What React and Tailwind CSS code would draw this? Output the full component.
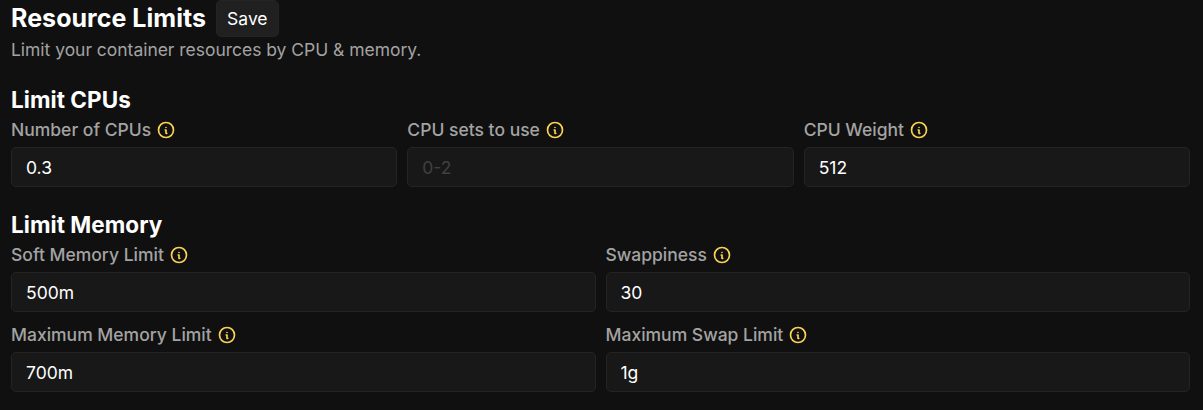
const InfoIcon = () => (
  <svg className="h-5 w-5 shrink-0 text-[#fcd452]" viewBox="0 0 24 24" fill="none" stroke="currentColor" strokeWidth="2" strokeLinecap="round" strokeLinejoin="round">
    <path d="M3 12a9 9 0 1 0 18 0a9 9 0 0 0-18 0m9-3h.01" />
    <path d="M11 12h1v4h1" />
  </svg>
);

const Field = ({ label, value, placeholder }) => (
  <div className="min-w-0 flex-1">
    <label className="mb-[5px] flex h-[25px] items-center gap-[5px] text-[17.5px] font-medium text-[#a3a3a3]">
      <span className="leading-[26px]">{label}</span>
      <InfoIcon />
    </label>
    <input
      className="block h-10 w-full rounded-[5px] border border-[#242424] bg-[#181818] px-3.5 text-[17.5px] text-white outline-none placeholder:text-[#404040]"
      defaultValue={value}
      placeholder={placeholder}
    />
  </div>
);

const SectionTitle = ({ children }) => (
  <h3 className="mt-5 h-[35px] text-[22.5px] leading-[35px] font-bold tracking-[0.05px] text-white">{children}</h3>
);

export default function App() {
  return (
    <div className="h-[410px] overflow-hidden bg-[#101010] pr-[13px] pl-[11px] font-['Inter',sans-serif]">
      <div className="flex h-[37px] items-center gap-2.5">
        <h2 className="text-[25px] leading-[35px] font-bold tracking-[0.04px] text-white">Resource Limits</h2>
        <button className="h-[37px] rounded-[5px] border border-[#242424] bg-[#202020] px-2.5 pt-0.5 text-[17.5px] text-white">Save</button>
      </div>
      <p className="text-[17.5px] leading-[25px] tracking-[-0.03px] text-[#a3a3a3]">Limit your container resources by CPU &amp; memory.</p>
      <SectionTitle>Limit CPUs</SectionTitle>
      <div className="flex gap-2.5">
        <Field label="Number of CPUs" value="0.3" />
        <Field label="CPU sets to use" placeholder="0-2" />
        <Field label="CPU Weight" value="512" />
      </div>
      <SectionTitle>Limit Memory</SectionTitle>
      <div className="flex flex-col gap-2.5">
        <div className="flex gap-2.5">
          <Field label="Soft Memory Limit" value="500m" />
          <Field label="Swappiness" value="30" />
        </div>
        <div className="flex gap-2.5">
          <Field label="Maximum Memory Limit" value="700m" />
          <Field label="Maximum Swap Limit" value="1g" />
        </div>
      </div>
    </div>
  );
}
